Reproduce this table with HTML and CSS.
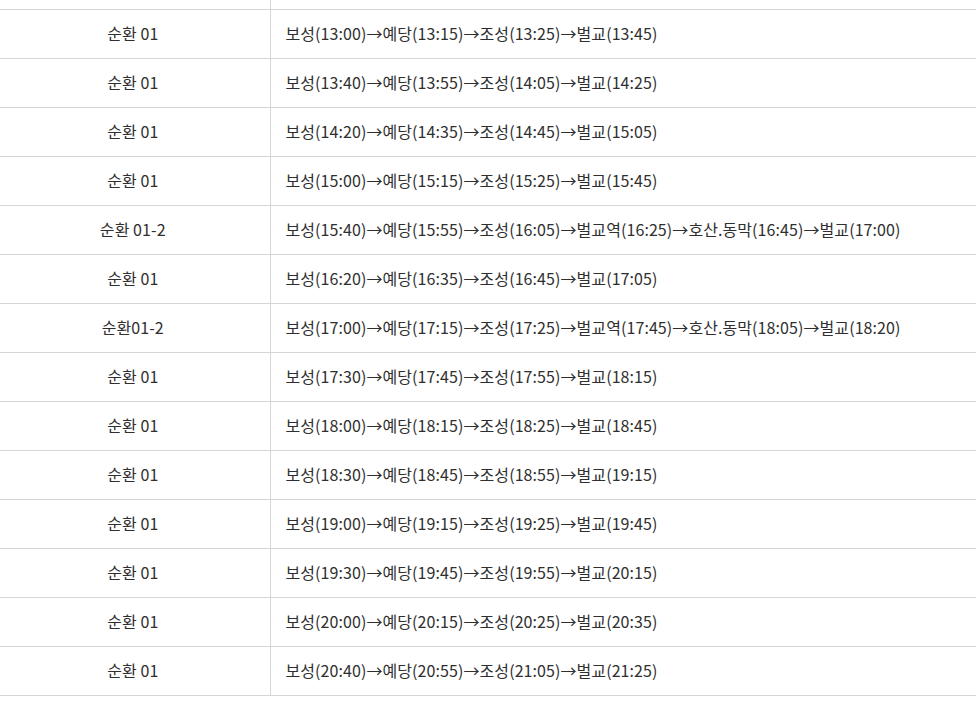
FILE: index.html
```html
<!DOCTYPE html>
<html lang="ko">
  <head>
    <meta charset="utf-8" />
    <title>순환버스 시간표</title>
    <link rel="stylesheet" href="styles.css">
  </head>
  <body>
    <table class="timetable">
      <colgroup>
        <col class="timetable__col-route" />
        <col />
      </colgroup>
      <tbody>
        <tr class="timetable__spacer"><td class="timetable__route"></td><td></td></tr>
        <tr><td class="timetable__route">순환 01</td><td>보성(13:00)→예당(13:15)→조성(13:25)→벌교(13:45)</td></tr>
        <tr><td class="timetable__route">순환 01</td><td>보성(13:40)→예당(13:55)→조성(14:05)→벌교(14:25)</td></tr>
        <tr><td class="timetable__route">순환 01</td><td>보성(14:20)→예당(14:35)→조성(14:45)→벌교(15:05)</td></tr>
        <tr><td class="timetable__route">순환 01</td><td>보성(15:00)→예당(15:15)→조성(15:25)→벌교(15:45)</td></tr>
        <tr><td class="timetable__route">순환 01-2</td><td>보성(15:40)→예당(15:55)→조성(16:05)→벌교역(16:25)→호산.동막(16:45)→벌교(17:00)</td></tr>
        <tr><td class="timetable__route">순환 01</td><td>보성(16:20)→예당(16:35)→조성(16:45)→벌교(17:05)</td></tr>
        <tr><td class="timetable__route">순환01-2</td><td>보성(17:00)→예당(17:15)→조성(17:25)→벌교역(17:45)→호산.동막(18:05)→벌교(18:20)</td></tr>
        <tr><td class="timetable__route">순환 01</td><td>보성(17:30)→예당(17:45)→조성(17:55)→벌교(18:15)</td></tr>
        <tr><td class="timetable__route">순환 01</td><td>보성(18:00)→예당(18:15)→조성(18:25)→벌교(18:45)</td></tr>
        <tr><td class="timetable__route">순환 01</td><td>보성(18:30)→예당(18:45)→조성(18:55)→벌교(19:15)</td></tr>
        <tr><td class="timetable__route">순환 01</td><td>보성(19:00)→예당(19:15)→조성(19:25)→벌교(19:45)</td></tr>
        <tr><td class="timetable__route">순환 01</td><td>보성(19:30)→예당(19:45)→조성(19:55)→벌교(20:15)</td></tr>
        <tr><td class="timetable__route">순환 01</td><td>보성(20:00)→예당(20:15)→조성(20:25)→벌교(20:35)</td></tr>
        <tr><td class="timetable__route">순환 01</td><td>보성(20:40)→예당(20:55)→조성(21:05)→벌교(21:25)</td></tr>
      </tbody>
    </table>
  </body>
</html>
```
FILE: styles.css
```css
body {
  margin: 0;
  background: #fff;
  font-family: "Noto Sans CJK KR", "Noto Sans", sans-serif;
  font-feature-settings: "locl" 0;
  font-size: 16px;
  letter-spacing: 0.08px;
  color: #2f2f2f;
}

.timetable {
  width: 100%;
  border-collapse: collapse;
}

.timetable__col-route {
  width: 270px;
}

.timetable td {
  height: 45px;
  padding: 0 0 3px 15px;
  border-bottom: 1px solid #d6d6d6;
  line-height: 20px;
  text-align: left;
  vertical-align: middle;
}

.timetable td.timetable__route {
  padding: 0 4px 3px 0;
  text-align: center;
  border-right: 1px solid #d6d6d6;
}

.timetable__spacer td,
.timetable__spacer td.timetable__route {
  height: 9px;
  padding: 0;
}
```
